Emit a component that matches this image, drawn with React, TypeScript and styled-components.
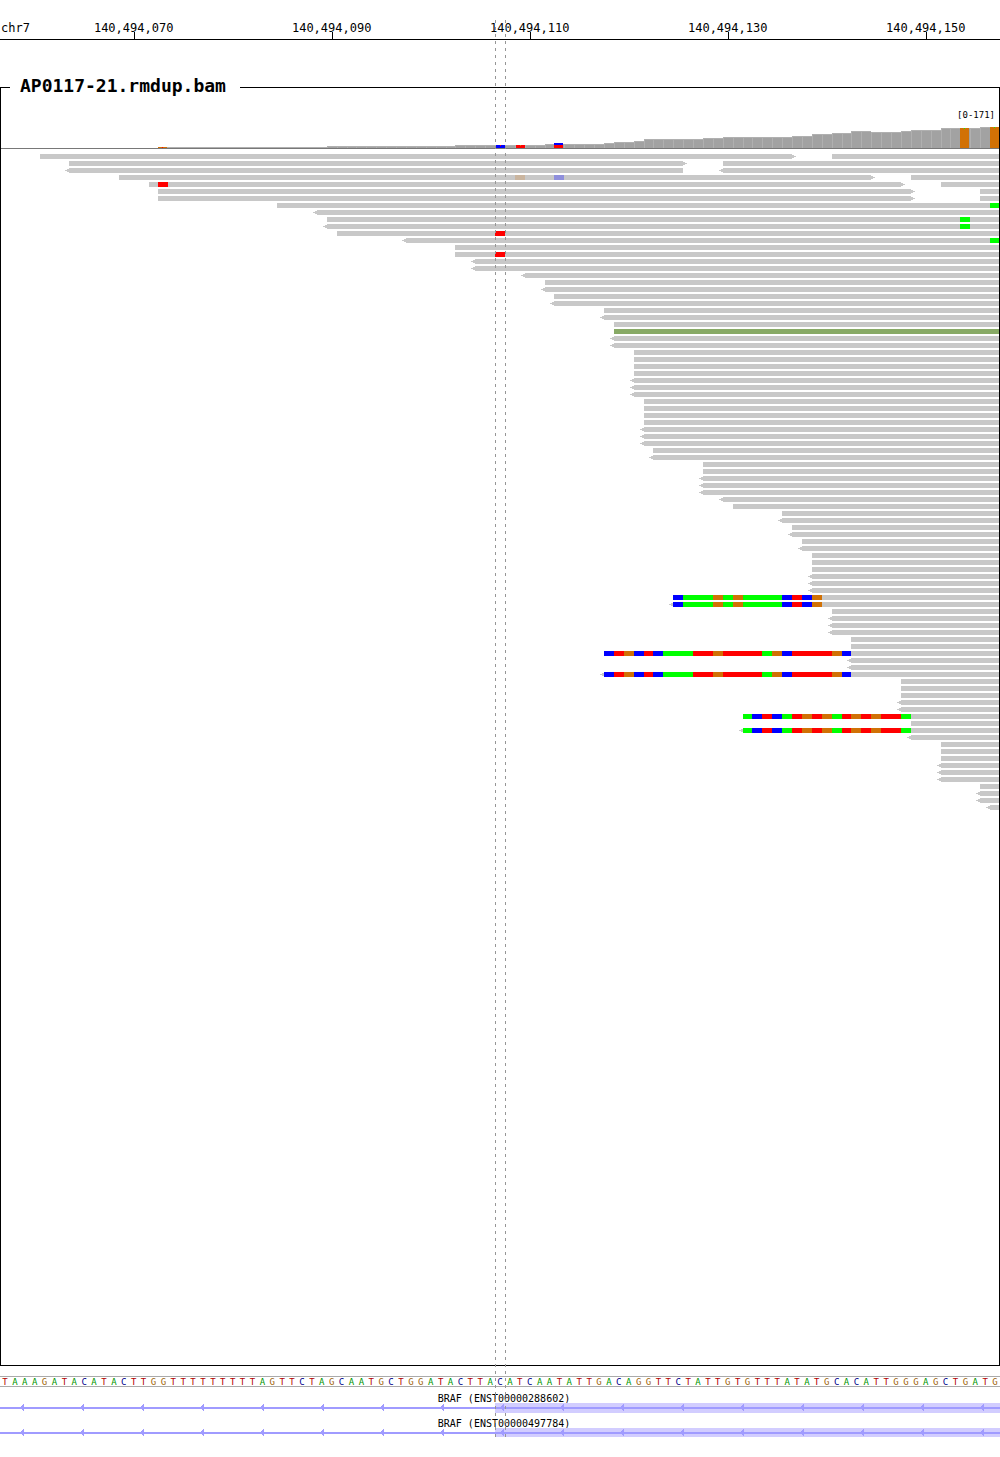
import React from "react";
import styled, { createGlobalStyle } from "styled-components";

type Base = "A" | "C" | "G" | "T";

const BASES = 101;
const VIEW_WIDTH = 1000;
const ROW_PITCH = 7;
const READ_HEIGHT = 5;

const READ_GREY = "#c8c8c8";
const BASE_FILL: Record<Base, string> = {
  A: "#00ff00",
  C: "#0000ff",
  G: "#d17105",
  T: "#ff0000",
};
const BASE_INK: Record<Base, string> = {
  A: "#009600",
  C: "#00008c",
  G: "#a0640a",
  T: "#b40000",
};

const SEQUENCE =
  "TAAAGATACATACTTGGTTTTTTTTTAGTTCTAGCAATGCTGGATACTTACATCAATATTGACAGGTTCTATTGTGTTTATATGCACATTGGGAGCTGATG";

const TICKS = [
  { label: "140,494,070", base: 13 },
  { label: "140,494,090", base: 33 },
  { label: "140,494,110", base: 53 },
  { label: "140,494,130", base: 73 },
  { label: "140,494,150", base: 93 },
];

const baseX = (base: number) => Math.round((base * VIEW_WIDTH) / BASES);

interface Read {
  start: number;
  end?: number;
  left?: boolean;
  right?: boolean;
  fill?: string;
  bases?: string;
  marks?: { base: number; fill: string }[];
}

const fwd = (start: number, count = 1): Read[][] =>
  Array.from({ length: count }, () => [{ start }]);
const rev = (start: number, count = 1): Read[][] =>
  Array.from({ length: count }, () => [{ start, left: true }]);

const READ_ROWS: Read[][] = [
  [{ start: 4, end: 80, right: true }, { start: 84 }],
  [{ start: 7, end: 69, right: true }, { start: 73 }],
  [{ start: 7, end: 69, left: true }, { start: 73, left: true }],
  [
    {
      start: 12,
      end: 88,
      right: true,
      marks: [
        { base: 52, fill: "#cab59f" },
        { base: 56, fill: "#8f8fdc" },
      ],
    },
    { start: 92 },
  ],
  [{ start: 15, end: 91, right: true, marks: [{ base: 16, fill: BASE_FILL.T }] }, { start: 95 }],
  [{ start: 16, end: 92, right: true }, { start: 99 }],
  [{ start: 16, end: 92, right: true }, { start: 99 }],
  [{ start: 28, marks: [{ base: 100, fill: BASE_FILL.A }] }],
  ...rev(32),
  [{ start: 33, marks: [{ base: 97, fill: BASE_FILL.A }] }],
  [{ start: 33, left: true, marks: [{ base: 97, fill: BASE_FILL.A }] }],
  [{ start: 34, marks: [{ base: 50, fill: BASE_FILL.T }] }],
  [{ start: 41, left: true, marks: [{ base: 100, fill: BASE_FILL.A }] }],
  ...fwd(46),
  [{ start: 46, marks: [{ base: 50, fill: BASE_FILL.T }] }],
  ...rev(48, 2),
  ...rev(53),
  ...fwd(55),
  ...rev(55),
  ...fwd(56),
  ...rev(56),
  ...fwd(61),
  ...rev(61),
  ...fwd(62),
  [{ start: 62, fill: "#88aa66" }],
  ...rev(62, 2),
  ...fwd(64, 4),
  ...rev(64, 3),
  ...fwd(65, 4),
  ...rev(65, 3),
  ...fwd(66),
  ...rev(66),
  ...fwd(71, 2),
  ...rev(71, 3),
  ...rev(73),
  ...fwd(74),
  ...fwd(79),
  ...rev(79),
  ...fwd(80),
  ...rev(80),
  ...fwd(81),
  ...rev(81),
  ...fwd(82, 3),
  ...rev(82, 3),
  [{ start: 68, bases: "CAAAGAGAAAACTCG" }],
  [{ start: 68, left: true, bases: "CAAAGAGAAAACTCG" }],
  ...fwd(84),
  ...rev(84, 3),
  ...fwd(86, 2),
  [{ start: 61, bases: "CTGCTCAAATTGTTTTAGCTTTTGC" }],
  ...rev(86, 2),
  [{ start: 61, left: true, bases: "CTGCTCAAATTGTTTTAGCTTTTGC" }],
  ...fwd(91, 3),
  ...rev(91, 2),
  [{ start: 75, bases: "ACTCATGTGATGTGTTA" }],
  ...fwd(92),
  [{ start: 75, left: true, bases: "ACTCATGTGATGTGTTA" }],
  ...rev(92),
  ...fwd(95, 3),
  ...rev(95, 3),
  ...fwd(99),
  ...rev(99, 2),
  ...rev(100),
];

/* Depth steps: from each base on, the bar is this many pixels tall. */
const DEPTH_STEPS: [number, number][] = [
  [16, 1], [33, 2], [46, 3], [55, 4], [61, 5], [62, 6], [64, 7], [65, 9],
  [71, 10], [73, 11], [80, 12], [82, 14], [84, 15], [86, 17], [88, 16],
  [91, 17], [92, 18], [95, 20], [99, 21],
];

const depthAt = (base: number) =>
  DEPTH_STEPS.reduce((depth, [from, value]) => (base >= from ? value : depth), 0);

const ALLELES = [
  { x: 158, y: 20, width: 9, height: 1, fill: BASE_FILL.G },
  { x: 162, y: 20, width: 1, height: 1, fill: BASE_FILL.T },
  { x: 496, y: 18, width: 9, height: 3, fill: BASE_FILL.C },
  { x: 500, y: 18, width: 1, height: 1, fill: BASE_FILL.T },
  { x: 516, y: 18, width: 9, height: 3, fill: BASE_FILL.T },
  { x: 520, y: 18, width: 1, height: 1, fill: BASE_FILL.G },
  { x: 554, y: 16, width: 9, height: 2, fill: BASE_FILL.C },
  { x: 554, y: 18, width: 9, height: 3, fill: BASE_FILL.T },
  { x: 960, y: 1, width: 9, height: 20, fill: BASE_FILL.G },
  { x: 964, y: 1, width: 1, height: 1, fill: BASE_FILL.A },
  { x: 990, y: 0, width: 9, height: 21, fill: BASE_FILL.G },
  { x: 994, y: 0, width: 1, height: 1, fill: BASE_FILL.A },
];

const TRANSCRIPTS = [
  { name: "BRAF (ENST00000288602)", exonHeight: 10 },
  { name: "BRAF (ENST00000497784)", exonHeight: 9 },
];

const GlobalStyle = createGlobalStyle`
  body {
    margin: 0;
    background: #fff;
    color: #000;
    font-family: "DejaVu Sans Mono", "Liberation Mono", monospace;
  }
`;

const Browser = styled.main`
  position: relative;
  display: flex;
  flex-direction: column;
  padding-bottom: 19px;
  overflow: hidden;
`;

const Ruler = styled.header`
  display: grid;
  grid-template-columns: repeat(${BASES * 2}, minmax(0, 1fr));
  align-items: end;
  height: 39px;
  border-bottom: 1px solid #000;
  font-size: 12px;
  line-height: 14px;
`;

const Chromosome = styled.span`
  grid-column: 1 / span 8;
  padding: 0 0 4px 1px;
  white-space: nowrap;
`;

const Tick = styled.span<{ $base: number }>`
  grid-column: ${({ $base }) => $base * 2 - 8} / span 20;
  grid-row: 1;
  display: grid;
  justify-items: center;
  white-space: nowrap;

  span {
    grid-area: 1 / 1;
    padding-bottom: 4px;
  }

  &::after {
    content: "";
    grid-area: 1 / 1;
    align-self: end;
    width: 1px;
    height: 7px;
    margin-left: 1px;
    background: #000;
  }
`;

const Track = styled.fieldset`
  min-width: 0;
  margin: 35px 0 0;
  padding: 0;
  border: 1px solid #000;
`;

const TrackName = styled.legend`
  margin-left: 9px;
  padding: 0 14px 2px 10px;
  font-size: 18px;
  line-height: 22px;
  font-weight: bold;
`;

const DepthRange = styled.div`
  padding: 11px 4px 6px 0;
  font-size: 9px;
  line-height: 11px;
  text-align: right;
`;

const Chart = styled.svg<{ $height: number }>`
  display: block;
  width: 100%;
  height: ${({ $height }) => $height}px;
  shape-rendering: crispEdges;
`;

const Reads = styled.div`
  min-height: 1216px;
  padding-top: 5px;
  box-sizing: border-box;
`;

const SequenceStrip = styled.div`
  display: grid;
  grid-template-columns: repeat(${BASES}, minmax(0, 1fr));
  height: 9px;
  margin-top: 10px;
  border: solid #aaa;
  border-width: 1px 0;
  font-size: 9px;
  line-height: 11px;
  text-align: center;
`;

const Nucleotide = styled.span<{ $base: Base }>`
  color: ${({ $base }) => BASE_INK[$base]};
`;

const Genes = styled.section`
  display: flex;
  flex-direction: column;
  gap: 7px;
  padding-top: 8px;
`;

const GeneName = styled.div`
  padding-left: 8px;
  font-size: 10px;
  line-height: 8px;
  text-align: center;
`;

const Guides = styled.div`
  position: absolute;
  top: 20px;
  bottom: 20px;
  left: calc(100% * 50 / ${BASES});
  width: calc(100% / ${BASES});
  display: flex;
  justify-content: space-between;
  pointer-events: none;
`;

const Guide = styled.span`
  width: 1px;
  margin-right: -1px;
  background: repeating-linear-gradient(#969696 0 3px, transparent 3px 7px);
`;

function ReadShape({ read, y }: { read: Read; y: number }) {
  const x = baseX(read.start);
  const end = baseX(read.end ?? BASES);
  const letters = (read.bases ?? "").split("") as Base[];
  return (
    <g>
      <rect x={x} y={y} width={end - x} height={READ_HEIGHT} fill={read.fill ?? READ_GREY} />
      {read.left && (
        <path d={`M${x} ${y + 1}h-2v1h-2v1h2v1h2z`} fill={READ_GREY} />
      )}
      {read.right && (
        <path d={`M${end} ${y + 1}h2v1h2v1h-2v1h-2z`} fill={READ_GREY} />
      )}
      {letters.map((letter, i) => {
        const left = baseX(read.start + i);
        return (
          <rect
            key={i}
            x={left}
            y={y}
            width={baseX(read.start + i + 1) - left}
            height={READ_HEIGHT}
            fill={BASE_FILL[letter]}
          />
        );
      })}
      {read.marks?.map((mark) => (
        <rect key={mark.base} x={baseX(mark.base)} y={y} width={10} height={READ_HEIGHT} fill={mark.fill} />
      ))}
    </g>
  );
}

function CoverageChart() {
  return (
    <Chart
      $height={22}
      viewBox="1 0 998 22"
      preserveAspectRatio="none"
      role="img"
      aria-label="Read depth"
    >
      {Array.from({ length: BASES }, (_, base) => {
        const x = baseX(base);
        const width = baseX(base + 1) - x;
        const depth = depthAt(base);
        return (
          <g key={base}>
            <rect x={x} y={21 - depth} width={width} height={depth} fill="#b0b0b0" />
            {depth > 1 && (
              <rect x={x + 1} y={22 - depth} width={width - 1} height={depth - 1} fill="#a2a2a2" />
            )}
          </g>
        );
      })}
      {ALLELES.map((allele, i) => (
        <rect key={i} {...allele} />
      ))}
      <rect x={0} y={21} width={VIEW_WIDTH} height={1} fill="#787878" />
    </Chart>
  );
}

function ReadsChart() {
  const height = READ_ROWS.length * ROW_PITCH;
  return (
    <Chart
      $height={height}
      viewBox={`1 0 998 ${height}`}
      preserveAspectRatio="none"
      role="img"
      aria-label="Aligned reads"
    >
      {READ_ROWS.map((row, r) =>
        row.map((read, i) => <ReadShape key={`${r}-${i}`} read={read} y={r * ROW_PITCH} />)
      )}
    </Chart>
  );
}

function GeneChart({ exonHeight }: { exonHeight: number }) {
  return (
    <Chart $height={10} viewBox="0 0 1000 10" preserveAspectRatio="none" aria-hidden="true">
      <rect x={495} y={0} width={505} height={exonHeight} fill="#d2cdff" />
      <rect x={0} y={4} width={VIEW_WIDTH} height={2} fill="#a09bff" />
      {Array.from({ length: 17 }, (_, i) => (
        <g key={i} fill="#a09bff">
          <rect x={21 + i * 60} y={3} width={1} height={3} />
          <rect x={22 + i * 60} y={2} width={1} height={5} />
          <rect x={23 + i * 60} y={1} width={1} height={7} />
        </g>
      ))}
    </Chart>
  );
}

export default function App() {
  return (
    <>
      <GlobalStyle />
      <Browser>
        <Ruler>
          <Chromosome>chr7</Chromosome>
          {TICKS.map((tick) => (
            <Tick key={tick.label} $base={tick.base}>
              <span>{tick.label}</span>
            </Tick>
          ))}
        </Ruler>
        <Track>
          <TrackName>AP0117-21.rmdup.bam</TrackName>
          <DepthRange>[0-171]</DepthRange>
          <CoverageChart />
          <Reads>
            <ReadsChart />
          </Reads>
        </Track>
        <SequenceStrip>
          {(SEQUENCE.split("") as Base[]).map((base, i) => (
            <Nucleotide key={i} $base={base}>
              {base}
            </Nucleotide>
          ))}
        </SequenceStrip>
        <Genes>
          {TRANSCRIPTS.map((transcript) => (
            <div key={transcript.name}>
              <GeneName>{transcript.name}</GeneName>
              <GeneChart exonHeight={transcript.exonHeight} />
            </div>
          ))}
        </Genes>
        <Guides>
          <Guide />
          <Guide />
        </Guides>
      </Browser>
    </>
  );
}
